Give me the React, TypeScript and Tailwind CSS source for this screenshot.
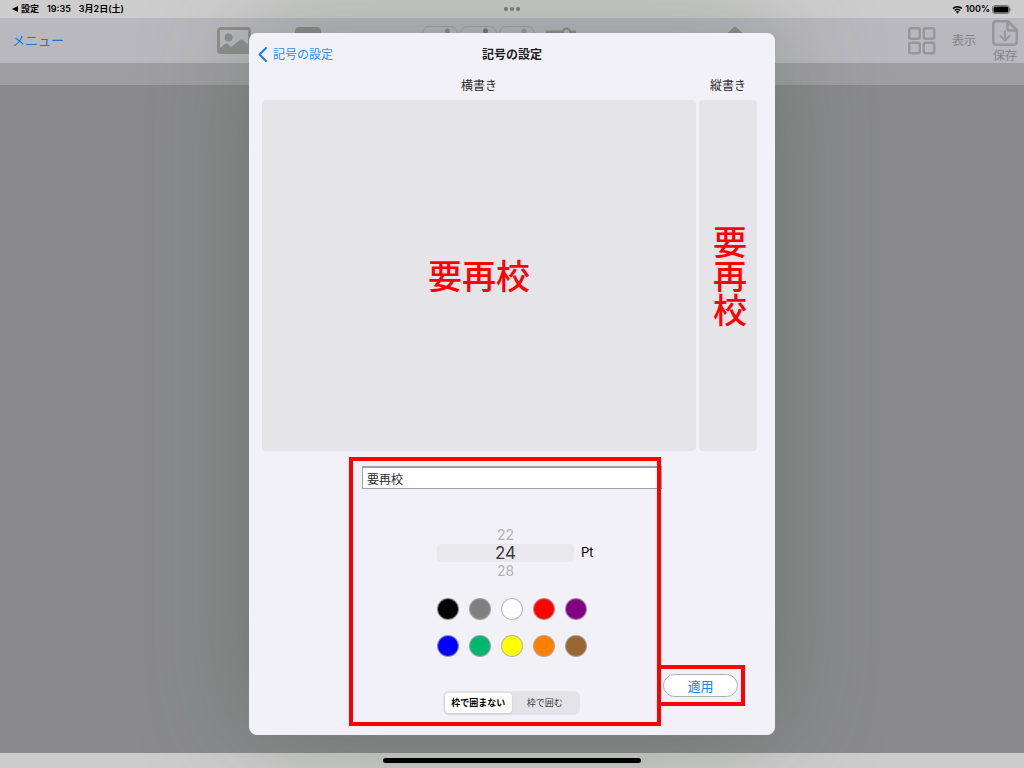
import { useState } from "react";

type Color = { name: string; className: string };

const sizes = [22, 24, 28];

const colors: Color[] = [
  { name: "黒", className: "bg-black" },
  { name: "灰", className: "bg-[#808080]" },
  { name: "白", className: "bg-white" },
  { name: "赤", className: "bg-[#ff0000]" },
  { name: "紫", className: "bg-[#800080]" },
  { name: "青", className: "bg-[#0000ff]" },
  { name: "緑", className: "bg-[#00b66e]" },
  { name: "黄", className: "bg-[#ffff00]" },
  { name: "橙", className: "bg-[#ff8000]" },
  { name: "茶", className: "bg-[#996633]" },
];

const frames = ["枠で囲まない", "枠で囲む"];

const StatusBar = () => (
  <div className="flex h-[18px] items-center justify-between bg-[#cdcdcd] px-3 text-[9px] font-semibold text-black">
    <div className="flex items-center gap-2">
      <a href="#settings" className="flex items-center gap-[3px]">
        <svg width="6" height="6" viewBox="0 0 6 6">
          <path d="M6 0v6L0 3z" />
        </svg>
        設定
      </a>
      <span>19:35</span>
      <span>3月2日(土)</span>
    </div>
    <div className="flex items-center gap-[2px]">
      <svg width="11" height="9" viewBox="0 0 22 18" fill="none" stroke="#000">
        <path d="M2 7.2a13 13 0 0 1 18 0" strokeWidth="3" />
        <path d="M5.6 11a8 8 0 0 1 10.8 0" strokeWidth="3" />
        <path d="M11 17l-3.4-3.6a5 5 0 0 1 6.8 0z" fill="#000" stroke="none" />
      </svg>
      <span>100%</span>
      <svg width="20" height="9" viewBox="0 0 20 9">
        <rect x=".5" y=".5" width="17" height="8" rx="2.5" fill="none" stroke="#777" />
        <rect x="1.5" y="1.5" width="15" height="6" rx="1.5" />
        <path d="M18.5 3v3c1-.3 1-2.7 0-3z" fill="#777" />
      </svg>
    </div>
  </div>
);

const Toolbar = () => (
  <div className="flex h-[45px] items-center bg-[#b9b8be] pr-[6px]">
    <div className="flex w-[217px] pb-[2px] pl-3">
      <button className="text-[13px] leading-5 text-[#2672c4]">メニュー</button>
    </div>
    <svg width="370" height="45" viewBox="0 0 370 45" className="shrink-0" fill="none">
      <rect x="1.5" y="10.5" width="31" height="24" rx="2.5" stroke="#8d8f8d" strokeWidth="3" />
      <circle cx="11.5" cy="19.5" r="4" fill="#8d8f8d" />
      <path d="M2 31l6-5q1.5-1 3 0l3 3 9-7q1.5-1 3 0l8 7v6H2z" fill="#8d8f8d" />
      <path d="M78 20v-7q0-4 4-4h18q4 0 4 4v7z" fill="#8a8d8a" />
      <g stroke="#a0a3a3">
        <rect x="205.5" y="8.5" width="35" height="20" rx="7" />
        <rect x="243.5" y="8.5" width="36" height="20" rx="7" />
        <rect x="282.5" y="8.5" width="35" height="20" rx="7" />
      </g>
      <g fill="#898c8a">
        <circle cx="230.5" cy="13" r="2.5" />
        <circle cx="268.5" cy="13" r="2.5" fill="#717472" />
        <circle cx="307" cy="13" r="2.5" fill="#959898" />
      </g>
      <path d="M329 14h16M354 14h5" stroke="#8a8d8a" strokeWidth="3" />
      <circle cx="349.5" cy="14" r="3.5" stroke="#8a8d8a" strokeWidth="2" />
    </svg>
    <svg width="18" height="28" viewBox="0 0 18 28" className="mb-[1px] ml-[139px] shrink-0">
      <path d="M1 7.5l7-6.5q1-1 2 0l7 6.5v19H1z" fill="#8a8d8a" />
    </svg>
    <div className="ml-auto flex h-full items-center text-[12px] text-[#838287]">
      <button aria-label="一覧">
        <svg width="28" height="28" viewBox="0 0 28 28" fill="none" stroke="#97969b" strokeWidth="2.5">
          <rect x="1.25" y="1.25" width="10.5" height="10.5" rx="2" />
          <rect x="15.75" y="1.25" width="10.5" height="10.5" rx="2" />
          <rect x="1.25" y="15.75" width="10.5" height="10.5" rx="2" />
          <rect x="15.75" y="15.75" width="10.5" height="10.5" rx="2" />
        </svg>
      </button>
      <button className="ml-4">表示</button>
      <button className="ml-4 flex flex-col items-center pt-[2px]">
        <svg width="26" height="26" viewBox="0 0 26 26" fill="none" stroke="#97969b" strokeWidth="2.5">
          <path d="M4.25 1.25h11.5l9 8.5v12a3 3 0 0 1-3 3H4.25a3 3 0 0 1-3-3v-17.5a3 3 0 0 1 3-3z" />
          <path d="M15.5 1.5v7a2 2 0 0 0 2 2h7.5" />
          <path d="M13 10.5v10M8 15.5l5 5 5-5" strokeWidth="2" />
        </svg>
        <span className="pt-[2px] leading-4">保存</span>
      </button>
    </div>
  </div>
);

const App: React.FC = () => {
  const [text, setText] = useState("要再校");
  const [size, setSize] = useState(24);
  const [color, setColor] = useState("赤");
  const [frame, setFrame] = useState(frames[0]);

  return (
    <div className="relative flex min-h-screen flex-col overflow-hidden bg-[#8a8a8c] font-['Inter','Noto_Sans_CJK_JP',sans-serif]">
      <StatusBar />
      <Toolbar />
      <div className="h-[22px] bg-[#9f9ea3]" />
      <div className="flex-1" />
      <div className="h-[15px] bg-[#cccccc]" />

      <div className="absolute inset-0 flex justify-center py-[33px]">
        <main className="flex w-full max-w-[526px] flex-col rounded-lg bg-[#f2f1f7] shadow-[0_0_110px_rgba(60,75,55,0.34)]">
          <header className="grid h-[42px] grid-cols-3 items-center px-[9px] text-[12px]">
            <a href="#back" className="flex items-center gap-[6px] text-[#2e8cf7]">
              <svg width="9" height="15" viewBox="0 0 9 15" fill="none" stroke="#147efb" strokeWidth="2">
                <path d="M8 1L1.5 7.5l6.5 6.5" strokeLinecap="round" strokeLinejoin="round" />
              </svg>
              <span className="pt-[2px]">記号の設定</span>
            </a>
            <h1 className="pt-[2px] text-center font-bold text-[#1c1c1e]">記号の設定</h1>
          </header>

          <div className="grid flex-1 grid-cols-[1fr_58px] grid-rows-[25px_1fr] gap-x-[3px] pr-[18px] pl-[13px] text-center text-[12px] text-[#2a2a2c]">
            <h2 className="leading-[22px]">横書き</h2>
            <h2 className="leading-[22px]">縦書き</h2>
            <div className="flex items-center justify-center rounded bg-[#e5e4e9] pt-[2px] text-[34px] font-medium text-[#ff0000]">
              {text}
            </div>
            <div className="flex items-center justify-center rounded bg-[#e5e4e9] text-[34px] font-medium text-[#ff0000] [writing-mode:vertical-rl]">
              {text}
            </div>
          </div>

          <div className="mt-[6px] mb-[9px] ml-[100px] flex items-end">
            <section className="relative w-[312px] pt-[9px] pb-[11px]">
              <input
                type="text"
                aria-label="記号"
                value={text}
                onChange={(e) => setText(e.target.value)}
                className="ml-[13px] block h-[23px] w-[300px] rounded-none border border-t-2 border-[#a0a0a0] bg-white px-1 text-[12px] text-[#2a2a2c]"
              />

              <div className="mt-[37px] ml-[88px] flex items-center gap-[7px]">
                <div role="listbox" aria-label="サイズ" className="flex w-[137px] flex-col">
                  {sizes.map((value) => (
                    <button
                      key={value}
                      role="option"
                      aria-selected={value === size}
                      onClick={() => setSize(value)}
                      className={
                        value === size
                          ? "h-[18px] rounded bg-[#e9e8ed] text-[17px] leading-[18px] text-[#3a3a3c]"
                          : "h-[18px] text-[14px] leading-[18px] text-[#b4b3b8]"
                      }
                    >
                      {value}
                    </button>
                  ))}
                </div>
                <span className="text-[13px] text-black">Pt</span>
              </div>

              <div className="mt-[18px] ml-[88px] grid w-[150px] grid-cols-5 gap-x-[10px] gap-y-[15px]">
                {colors.map((item) => (
                  <input
                    key={item.name}
                    type="radio"
                    name="color"
                    aria-label={item.name}
                    checked={item.name === color}
                    onChange={() => setColor(item.name)}
                    className={`size-[22px] appearance-none rounded-full border border-[#aaaaaa]/80 bg-clip-border ${item.className}`}
                  />
                ))}
              </div>

              <div className="mt-[34px] ml-[94px] flex h-6 w-[137px] rounded-md bg-[#e4e3e8] p-[2px] text-[9px]">
                {frames.map((label) => (
                  <button
                    key={label}
                    aria-pressed={label === frame}
                    onClick={() => setFrame(label)}
                    className={
                      label === frame
                        ? "w-1/2 rounded bg-white font-bold whitespace-nowrap text-black shadow-sm"
                        : "w-1/2 whitespace-nowrap text-[#3a3a3c]"
                    }
                  >
                    {label}
                  </button>
                ))}
              </div>
              <div className="pointer-events-none absolute inset-0 border-4 border-[#ff0000]" />
            </section>

            <div className="mb-5 -ml-1 border-4 border-[#ff0000] py-[5px] pr-[3px] pl-[2px]">
              <button className="block h-[23px] w-[75px] rounded-full border border-[#b0b0b4] bg-white text-[13px] leading-5 text-[#1a82fb]">
                適用
              </button>
            </div>
          </div>
        </main>
      </div>

      <div className="absolute inset-x-0 top-[7px] flex justify-center gap-[2px]">
        <span className="size-1 rounded-full bg-[#747672]" />
        <span className="size-1 rounded-full bg-[#747672]" />
        <span className="size-1 rounded-full bg-[#747672]" />
      </div>
      <div className="absolute inset-x-0 bottom-[5px] flex justify-center">
        <span className="h-[5px] w-[258px] rounded-full bg-black" />
      </div>
    </div>
  );
};

export default App;
